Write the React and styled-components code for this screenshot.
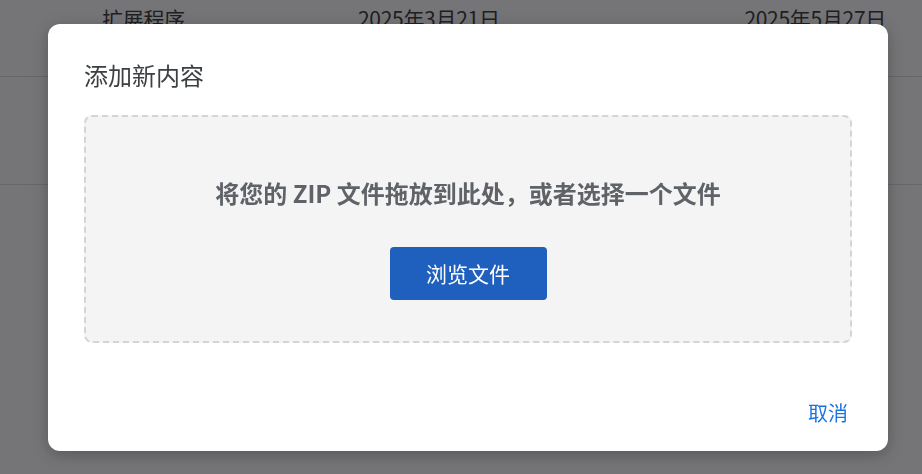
import React from 'react'
import styled, { createGlobalStyle } from 'styled-components'

const Global = createGlobalStyle`
  html, body { margin: 0; padding: 0; background: #fff; }
  body {
    font-family: "Noto Sans CJK SC", "Noto Sans", sans-serif;
    overflow: hidden;
  }
`

export default function App() {
  return (
    <>
      <Global />
      <Page>
        <Table>
          <Row>
            <Cell>扩展程序</Cell>
            <Cell>2025年3月21日</Cell>
            <Cell $right>2025年5月27日</Cell>
          </Row>
          <Row />
          <Row />
        </Table>
      </Page>
      <Overlay>
        <Dialog>
          <Title>添加新内容</Title>
          <DropZone>
            <DropText>将您的 ZIP 文件拖放到此处，或者选择一个文件</DropText>
            <BrowseButton>浏览文件</BrowseButton>
          </DropZone>
          <Footer>
            <TextButton>取消</TextButton>
          </Footer>
        </Dialog>
      </Overlay>
    </>
  )
}

// styled-components

const Page = styled.div`
  height: 474px;
  overflow: hidden;
`
const Table = styled.div`
  margin-top: -31px;
`
const Row = styled.div`
  display: grid;
  grid-template-columns: 256px 1fr 1fr;
  padding: 0 36px 10px 102px;
  height: 97px;
  align-items: center;
  border-bottom: 1px solid #dadce0;
  &:last-child { border-bottom: none; }
`
const Cell = styled.div`
  font-size: 21px;
  letter-spacing: -0.3px;
  color: #202124;
  text-align: ${p => (p.$right ? 'right' : 'left')};
`
const Overlay = styled.div`
  position: fixed;
  inset: 0;
  background: rgba(32, 33, 36, 0.62);
  display: flex;
  align-items: center;
  justify-content: center;
  padding-left: 14px;
`
const Dialog = styled.div`
  width: 840px;
  box-sizing: border-box;
  background: #fff;
  border-radius: 12px;
  padding: 35px 36px 20px;
  box-shadow: 0 4px 16px rgba(0, 0, 0, 0.25);
  display: flex;
  flex-direction: column;
`
const Title = styled.h2`
  margin: 0 0 24px;
  font-size: 24px;
  line-height: 32px;
  font-weight: 400;
  color: #3c4043;
`
const DropZone = styled.div`
  border: 2px dashed #d4d4d4;
  border-radius: 8px;
  background: #f4f4f4;
  padding: 60px 0 41px;
  display: flex;
  flex-direction: column;
  align-items: center;
`
const DropText = styled.div`
  font-size: 24px;
  line-height: 32px;
  font-weight: 700;
  color: #5f6368;
  margin-bottom: 38px;
`
const BrowseButton = styled.button`
  width: 157px;
  height: 53px;
  border: none;
  border-radius: 4px;
  background: #1f5fbd;
  color: #fff;
  font-family: inherit;
  font-size: 21px;
`
const Footer = styled.div`
  display: flex;
  justify-content: flex-end;
  margin-top: 52px;
`
const TextButton = styled.button`
  height: 36px;
  padding: 0 4px;
  border: none;
  background: transparent;
  color: #1a73e8;
  font-family: inherit;
  font-size: 20px;
`
